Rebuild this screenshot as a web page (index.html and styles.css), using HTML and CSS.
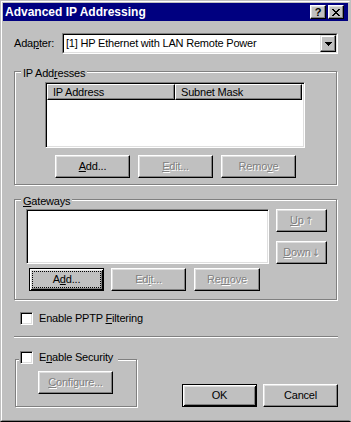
FILE: index.html
```html
<!DOCTYPE html>
<html>
<head>
<meta charset="utf-8">
<link rel="stylesheet" href="styles.css">
</head>
<body>
<div class="win">
  <div class="frame">
    <div class="titlebar">
      <span class="title">Advanced IP Addressing</span>
      <div class="tbtns">
        <span class="tbtn help">?</span>
        <span class="tbtn close"><svg width="8" height="7" viewBox="0 0 8 7" shape-rendering="crispEdges"><path d="M0 0h2v1h-2z M6 0h2v1h-2z M1 1h2v1h-2z M5 1h2v1h-2z M2 2h4v1h-4z M3 3h2v1h-2z M2 4h4v1h-4z M1 5h2v1h-2z M5 5h2v1h-2z M0 6h2v1h-2z M6 6h2v1h-2z" fill="#000"/></svg></span>
      </div>
    </div>
    <div class="body">
      <div class="adapter-row">
        <span class="lbl">Ada<u>p</u>ter:</span>
        <div class="combo">
          <div class="combo-in">
            <span class="combo-text">[1] HP Ethernet with LAN Remote Power</span>
            <span class="ddbtn"><svg width="7" height="4" viewBox="0 0 7 4" shape-rendering="crispEdges"><path d="M0 0h7v1h-7z M1 1h5v1h-5z M2 2h3v1h-3z M3 3h1v1h-1z" fill="#000"/></svg></span>
          </div>
        </div>
      </div>

      <div class="group ipgroup">
        <span class="legend">IP Add<u>r</u>esses</span>
        <div class="listview">
          <div class="lv-head">
            <span class="hcell c1">IP Address</span>
            <span class="hcell c2">Subnet Mask</span>
          </div>
        </div>
        <div class="btnrow">
          <button class="btn"><u>A</u>dd...</button>
          <button class="btn dis"><u>E</u>dit...</button>
          <button class="btn dis">Remo<u>v</u>e</button>
        </div>
      </div>

      <div class="group gwgroup">
        <span class="legend"><u>G</u>ateways</span>
        <div class="gw-left">
          <div class="listbox"></div>
          <div class="gw-btns">
            <button class="btn default focus">A<u>d</u>d...</button>
            <button class="btn dis gw-edit">Ed<u>i</u>t...</button>
            <button class="btn dis gw-remove">Re<u>m</u>ove</button>
          </div>
        </div>
        <div class="gw-right">
          <button class="btn dis updown"><u>U</u>p<span class="arr">↑</span></button>
          <button class="btn dis updown"><u>D</u>own<span class="arr">↓</span></button>
        </div>
      </div>

      <div class="check-row">
        <span class="checkbox"></span>
        <span>Enable PPTP <u>F</u>iltering</span>
      </div>

      <div class="sep"></div>

      <div class="bottom">
        <div class="group secgroup">
          <span class="check-legend">
            <span class="checkbox"></span>
            <span>E<u>n</u>able Security</span>
          </span>
          <button class="btn dis"><u>C</u>onfigure...</button>
        </div>
        <div class="okcancel">
          <button class="btn default">OK</button>
          <button class="btn">Cancel</button>
        </div>
      </div>
    </div>
  </div>
</div>
</body>
</html>
```
FILE: styles.css
```css
* { box-sizing: border-box; }
html, body { margin: 0; padding: 0; }
body { width: 351px; height: 422px; overflow: hidden; background: #c0c0c0; }

.win {
  width: 351px;
  height: 422px;
  background: #c0c0c0;
  border: 1px solid;
  border-color: #c0c0c0 #c0c0c0 #000 #c0c0c0;
  font-family: "Liberation Sans", Arial, sans-serif;
  font-size: 11px;
  letter-spacing: -0.2px;
  color: #000;
}
.frame {
  height: 100%;
  border: 1px solid;
  border-color: #fff #c0c0c0 #808080 #fff;
  padding: 1px;
  display: flex;
  flex-direction: column;
}

.titlebar {
  flex: none;
  height: 18px;
  background: #000080;
  color: #fff;
  display: flex;
  align-items: center;
  padding: 0 4px 0 2px;
}
.title { font-weight: bold; font-size: 12px; line-height: 18px; letter-spacing: 0; }
.tbtns { margin-left: auto; display: flex; gap: 2px; }
.tbtn {
  width: 16px;
  height: 14px;
  background: #c0c0c0;
  border: 1px solid;
  border-color: #fff #000 #000 #fff;
  box-shadow: inset -1px -1px #808080, inset 1px 1px #dfdfdf;
  display: flex;
  align-items: center;
  justify-content: center;
  color: #000;
  font-weight: bold;
  font-size: 11px;
  line-height: 12px;
  letter-spacing: 0;
}
.close svg { display: block; margin-left: -1px; }

.body { flex: 1; padding: 12px 10px 0 11px; }

.adapter-row { display: flex; align-items: center; height: 21px; }
.lbl { width: 48px; line-height: 13px; }
.combo {
  width: 276px;
  height: 21px;
  background: #fff;
  border: 1px solid;
  border-color: #808080 #fff #fff #808080;
}
.combo-in {
  height: 100%;
  border: 1px solid;
  border-color: #000 #dfdfdf #dfdfdf #000;
  display: flex;
  align-items: center;
}
.combo-text { flex: 1; padding-left: 2px; line-height: 13px; white-space: nowrap; }
.ddbtn {
  width: 16px;
  height: 17px;
  background: #c0c0c0;
  border: 1px solid;
  border-color: #dfdfdf #000 #000 #dfdfdf;
  box-shadow: inset -1px -1px #808080, inset 1px 1px #fff;
  display: flex;
  align-items: center;
  justify-content: center;
}
.ddbtn svg { display: block; }

.group {
  position: relative;
  border: 1px solid #808080;
  box-shadow: inset 1px 1px #fff, 1px 1px #fff;
}
.legend {
  position: absolute;
  top: -5px;
  left: 6px;
  padding: 0 2px;
  background: #c0c0c0;
  line-height: 13px;
  white-space: nowrap;
}

.ipgroup { width: 323px; height: 114px; margin-top: 17px; padding: 10px 0 6px; }
.listview {
  width: 260px;
  height: 66px;
  margin-left: 30px;
  background: #fff;
  border: 1px solid;
  border-color: #808080 #fff #fff #808080;
  box-shadow: inset 1px 1px #000, inset -1px -1px #dfdfdf;
  padding: 1px;
}
.lv-head { display: flex; height: 16px; }
.hcell {
  height: 16px;
  background: #c0c0c0;
  border: 1px solid;
  border-color: #fff #000 #000 #fff;
  box-shadow: inset -1px -1px #808080;
  padding-left: 5px;
  line-height: 14px;
  white-space: nowrap;
}
.c1 { width: 128px; }
.c2 { width: 127px; }

.btnrow { display: flex; gap: 8px; margin-top: 7px; padding-left: 40px; }

.btn {
  width: 75px;
  height: 23px;
  margin: 0;
  padding: 0;
  font: inherit;
  letter-spacing: inherit;
  color: #000;
  background: #c0c0c0;
  border: 1px solid;
  border-color: #fff #000 #000 #fff;
  box-shadow: inset -1px -1px #808080, inset 1px 1px #dfdfdf;
  display: flex;
  align-items: center;
  justify-content: center;
  line-height: 13px;
  white-space: nowrap;
}
.dis { color: #808080; text-shadow: 1px 1px 0 #fff; }
.default {
  border-color: #000;
  box-shadow: inset 1px 1px #fff, inset -1px -1px #000, inset 2px 2px #dfdfdf, inset -2px -2px #808080;
}
.focus { outline: 1px dotted #000; outline-offset: -4px; }

.gwgroup {
  width: 323px;
  height: 101px;
  margin-top: 14px;
  padding: 9px 0 0 11px;
  display: flex;
  gap: 7px;
}
.gw-left { width: 243px; }
.listbox {
  height: 55px;
  background: #fff;
  border: 1px solid;
  border-color: #808080 #fff #fff #808080;
  box-shadow: inset 1px 1px #000, inset -1px -1px #dfdfdf;
}
.gw-btns { display: flex; margin-top: 4px; padding-left: 3px; }
.gw-edit { margin-left: 7px; }
.gw-remove { margin-left: 8px; width: 66px; }
.gw-right { display: flex; flex-direction: column; gap: 9px; }
.updown { width: 51px; }
.arr { font-family: "DejaVu Sans", sans-serif; font-size: 10px; margin-left: 1px; }

.check-row {
  display: flex;
  align-items: center;
  gap: 6px;
  margin-top: 12px;
  padding-left: 6px;
  height: 13px;
  line-height: 13px;
}
.checkbox {
  flex: none;
  width: 13px;
  height: 13px;
  background: #fff;
  border: 1px solid;
  border-color: #808080 #fff #fff #808080;
  box-shadow: inset 1px 1px #000, inset -1px -1px #dfdfdf;
}

.sep {
  width: 324px;
  height: 2px;
  margin-top: 11px;
  border-top: 1px solid #808080;
  border-bottom: 1px solid #fff;
}

.bottom { display: flex; align-items: flex-end; margin-top: 21px; padding-left: 1px; }
.secgroup { width: 122px; height: 48px; padding: 11px 0 0 22px; }
.check-legend {
  position: absolute;
  top: -9px;
  left: 3px;
  display: flex;
  align-items: center;
  gap: 6px;
  padding: 0 5px 0 1px;
  height: 13px;
  line-height: 13px;
  background: #c0c0c0;
  white-space: nowrap;
}
.okcancel { margin-left: auto; display: flex; gap: 6px; }
```
